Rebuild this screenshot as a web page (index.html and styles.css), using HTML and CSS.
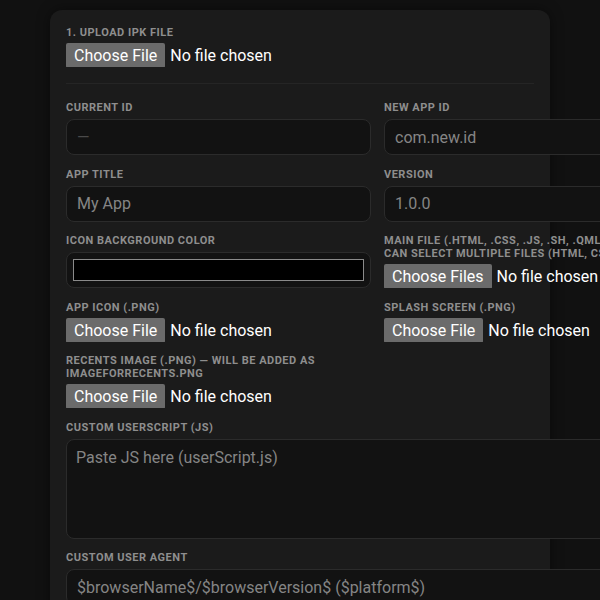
FILE: index.html
```html
<!DOCTYPE html>
<html lang="en">
<head>
    <meta charset="UTF-8">
    <meta name="viewport" content="width=device-width, initial-scale=1.0">
    <title>IPK Repacker</title>
    <link rel="stylesheet" href="styles.css">
</head>
<body>
    <div class="card">
        <div class="field file-field">
            <label for="ipkFile">1. Upload IPK file</label>
            <input type="file" id="ipkFile" accept=".ipk">
        </div>

        <div class="divider"></div>

        <div class="form-grid">
            <div class="field">
                <label for="currentId">Current ID</label>
                <input type="text" id="currentId" class="dim" placeholder="—" readonly>
            </div>
            <div class="field">
                <label for="newId">New app ID</label>
                <input type="text" id="newId" placeholder="com.new.id">
            </div>

            <div class="field">
                <label for="appTitle">App title</label>
                <input type="text" id="appTitle" placeholder="My App">
            </div>
            <div class="field">
                <label for="version">Version</label>
                <input type="text" id="version" placeholder="1.0.0">
            </div>

            <div class="field">
                <label for="iconBg">Icon background color</label>
                <input type="color" id="iconBg" value="#000000">
            </div>
            <div class="field file-field">
                <label for="mainFile">Main file (.html, .css, .js, .sh, .qml) — you can select multiple files (html, css, js)</label>
                <input type="file" id="mainFile" multiple>
            </div>

            <div class="field file-field">
                <label for="appIcon">App icon (.png)</label>
                <input type="file" id="appIcon" accept=".png">
            </div>
            <div class="field file-field">
                <label for="splash">Splash screen (.png)</label>
                <input type="file" id="splash" accept=".png">
            </div>

            <div class="field file-field">
                <label for="recents">Recents image (.png) — will be added as imageForRecents.png</label>
                <input type="file" id="recents" accept=".png">
            </div>
            <div class="field"></div>

            <div class="field wide">
                <label for="userScript">Custom userScript (JS)</label>
                <textarea id="userScript" placeholder="Paste JS here (userScript.js)"></textarea>
            </div>

            <div class="field wide">
                <label for="userAgent">Custom user agent</label>
                <input type="text" id="userAgent" placeholder="$browserName$/$browserVersion$ ($platform$)">
            </div>
        </div>
    </div>
</body>
</html>
```

FILE: styles.css
```css
html {
    color-scheme: dark;
}

body {
    margin: 0;
    background-color: #111;
    color: #fff;
    font-family: Roboto, 'Liberation Sans', sans-serif;
    overflow: hidden;
}

.card {
    width: 500px;
    box-sizing: border-box;
    margin: 10px 0 0 50px;
    padding: 16px 16px 40px;
    background-color: #1b1b1b;
    border-radius: 12px;
    box-shadow: 0 0 14px rgba(0, 0, 0, 0.45);
}

.field {
    display: flex;
    flex-direction: column;
    align-items: flex-start;
}

.field label {
    display: block;
    font-size: 11px;
    line-height: 13px;
    font-weight: bold;
    letter-spacing: 0.5px;
    text-transform: uppercase;
    color: #8e8e8e;
    margin-bottom: 5px;
}

.file-field label {
    margin-bottom: 4px;
}

.divider {
    border-top: 1px solid #252525;
    margin: 16px 0 17px;
}

.form-grid {
    display: grid;
    grid-template-columns: 305px 285px;
    column-gap: 13px;
    row-gap: 12.5px;
}

.wide {
    grid-column: 1 / 3;
}

input,
textarea {
    font-family: inherit;
    font-size: 16px;
    color: #ddd;
}

input[type="text"],
textarea,
input[type="color"] {
    width: 100%;
    box-sizing: border-box;
    background-color: #121212;
    border: 1px solid #2b2b2b;
    border-radius: 8px;
    outline: none;
}

input[type="text"] {
    height: 36px;
    padding: 8px 10px;
}

input::placeholder,
textarea::placeholder {
    color: #858585;
}

input.dim::placeholder {
    color: #4a4a4a;
}

textarea {
    height: 100px;
    padding: 8px 9px;
    resize: none;
}

input[type="color"] {
    height: 36px;
    padding: 6px;
}

input[type="color"]::-webkit-color-swatch-wrapper {
    padding: 0;
}

input[type="color"]::-webkit-color-swatch {
    border: 1px solid #8a8a8a;
    border-radius: 0;
}

input[type="file"] {
    color: #fff;
    line-height: 25px;
    height: 24px;
    overflow: visible;
}

input[type="file"]::file-selector-button {
    font-family: inherit;
    font-size: 16px;
    line-height: 19px;
    height: 25px;
    vertical-align: top;
    background-color: #6b6b6b;
    color: #fff;
    border: none;
    border-radius: 2px;
    padding: 3px 8px;
    margin-right: 5px;
}
```
